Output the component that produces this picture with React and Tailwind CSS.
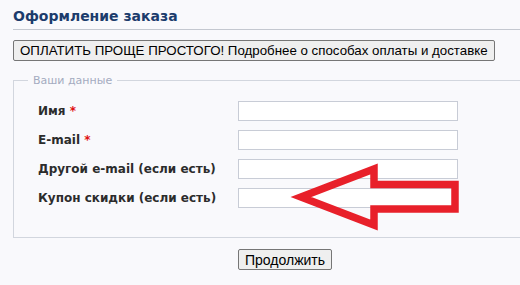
import React from "react";

const fields = [
  { label: "Имя", required: true },
  { label: "E-mail", required: true },
  { label: "Другой e-mail (если есть)" },
  { label: "Купон скидки (если есть)" },
];

const btn =
  "bg-[#efefef] border border-[#767676] rounded-[2px] text-black font-['Liberation_Sans',Arial,sans-serif] leading-none";

export default function App() {
  return (
    <div className="relative w-[520px] h-[285px] overflow-hidden bg-[#f9f9fc] font-['DejaVu_Sans',Verdana,sans-serif]">
      <div className="pl-[13px] pt-[7px]">
        {/* HEADER */}
        <h1 className="text-[14px] font-bold text-[#1c3c6c] leading-[18px] pb-[4px] border-b border-[#c4c8d0]">
          Оформление заказа
        </h1>

        <button className={`${btn} text-[13.3px] mt-[10px] h-[21px] px-[6px]`}>
          ОПЛАТИТЬ ПРОЩЕ ПРОСТОГО! Подробнее о способах оплаты и доставке
        </button>

        {/* FORM */}
        <fieldset className="mt-[12px] border border-r-0 border-[#d2d6de]">
          <legend className="ml-[14px] px-[5px] text-[11px] text-[#a4abc0] leading-[13px]">
            Ваши данные
          </legend>
          <div className="flex flex-col gap-[9px] pl-[24px] pt-[14px] pb-[29px]">
            {fields.map((f) => (
              <div key={f.label} className="flex items-center">
                <label className="w-[200px] text-[12px] font-bold text-[#2c2c2c]">
                  {f.label}
                  {f.required && <span className="text-[#e01010]"> *</span>}
                </label>
                <input className="w-[220px] h-[20px] bg-white border border-[#c8ccd6] outline-none" />
              </div>
            ))}
          </div>
        </fieldset>

        <div className="mt-[10px] pl-[225px]">
          <button className={`${btn} text-[14px] h-[21px] px-[6px]`}>Продолжить</button>
        </div>
      </div>

      {/* annotation arrow */}
      <svg className="absolute left-0 top-0" width="520" height="285">
        <polygon
          points="301,197 374,169 374,184.5 455,184.5 455,209 374,209 374,225"
          fill="none"
          stroke="#e8202a"
          strokeWidth="7.5"
          strokeLinejoin="miter"
          strokeMiterlimit="10"
        />
      </svg>
    </div>
  );
}
